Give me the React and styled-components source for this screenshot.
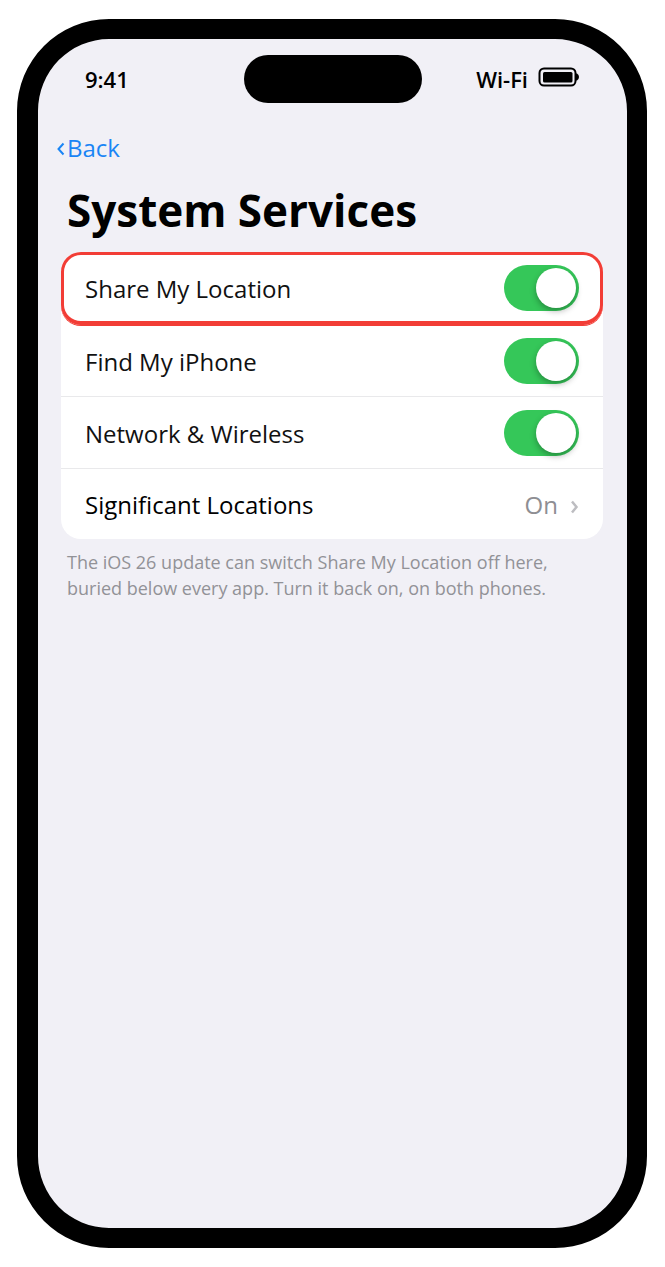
import React from "react";
import styled, { createGlobalStyle } from "styled-components";

const GlobalStyle = createGlobalStyle`
  * {
    box-sizing: border-box;
  }

  body {
    margin: 0;
    background: #fff;
    color: #000;
    font-family: "Open Sans", "Noto Sans", sans-serif;
  }
`;

const Page = styled.div`
  display: flex;
  min-height: 100vh;
  padding: 19px 18px 19px 17px;
`;

const Phone = styled.div`
  flex: 1;
  min-width: 0;
  border: 20px solid #000;
  border-left-width: 21px;
  border-radius: 92px;
  background: #f1f0f6;
`;

const StatusBar = styled.header`
  display: grid;
  grid-template-columns: 1fr 178px 1fr;
  align-items: center;
  padding: 16px 47px 0;
  font-size: 22px;
  font-weight: 600;
  line-height: 48px;
`;

const Island = styled.div`
  height: 48px;
  border-radius: 24px;
  background: #000;
`;

const Indicators = styled.div`
  display: flex;
  justify-content: flex-end;
  gap: 10px;
`;

const BatteryIcon = styled.svg`
  width: 42px;
  height: 20px;
  margin-top: 12px;
`;

const BackLink = styled.a`
  display: inline-flex;
  align-items: center;
  gap: 2px;
  margin: 28px 0 0 18px;
  color: #1a85f5;
  font-size: 24px;
  line-height: 34px;
  text-decoration: none;
`;

const BackChevron = styled.svg`
  width: 9px;
  height: 14px;
  margin-top: 2px;
`;

const Title = styled.h1`
  margin: 13px 29px 0;
  font-size: 44px;
  font-weight: 700;
  line-height: 64px;
`;

const List = styled.ul`
  margin: 10px 24px 0 23px;
  padding: 0;
  list-style: none;
  border-radius: 20px;
  background: #fff;
`;

const Row = styled.li`
  display: flex;
  align-items: center;
  justify-content: space-between;
  height: ${props => (props.$highlighted ? 73 : 72)}px;
  padding: 0 ${props => (props.$highlighted ? 21 : 24)}px;
  font-size: 24px;
  border: 0 solid #e9e9eb;
  border-bottom-width: 1px;

  &:last-child {
    height: 70px;
    border-bottom-width: 0;
  }

  ${props =>
    props.$highlighted &&
    `
    border: 3px solid #f23d36;
    border-bottom-width: 4px;
    border-radius: 20px;
    box-shadow: 0 1px 0 #f23d36;
  `}
`;

const Label = styled.label`
  padding-top: 2px;
  color: #111;
  line-height: 34px;
`;

const Switch = styled.input`
  appearance: none;
  display: flex;
  justify-content: flex-end;
  width: 75px;
  height: 46px;
  margin: 0;
  padding: 3px;
  border-radius: 23px;
  background: #e9e9ea;
  cursor: pointer;

  &::before {
    content: "";
    width: 40px;
    height: 40px;
    border-radius: 50%;
    background: #fff;
    box-shadow: 0 3px 6px rgba(0, 0, 0, 0.3);
  }

  &:checked {
    background: #35c759;
  }

  &:not(:checked) {
    justify-content: flex-start;
  }
`;

const DetailLink = styled.a`
  flex: 1;
  display: flex;
  align-items: center;
  justify-content: space-between;
  padding-top: 2px;
  color: inherit;
  line-height: 34px;
  text-decoration: none;
`;

const Detail = styled.span`
  display: flex;
  align-items: center;
  gap: 12px;
  color: #8e8e93;
`;

const DetailChevron = styled.svg`
  width: 9px;
  height: 14px;
  margin-top: 4px;
`;

const Note = styled.p`
  margin: 10px 29px 0;
  color: #929297;
  font-size: 18px;
  line-height: 26px;
`;

const Battery = () => (
  <BatteryIcon viewBox="0 0 42 20" aria-hidden="true">
    <rect
      x="1.5"
      y="1.5"
      width="36"
      height="17"
      rx="4.5"
      fill="none"
      stroke="#000"
      strokeWidth="2"
    />
    <rect x="5" y="5" width="29.5" height="10.5" rx="1.5" />
    <path d="M38 6.5h1q2 1 2 3.5t-2 3.5h-1z" />
  </BatteryIcon>
);

const services = [
  { id: "share", name: "Share My Location", highlighted: true },
  { id: "find", name: "Find My iPhone" },
  { id: "network", name: "Network & Wireless" }
];

class App extends React.Component {
  constructor() {
    super();
    this.state = { share: true, find: true, network: true };
  }

  toggle(id) {
    this.setState({ [id]: !this.state[id] });
  }

  render() {
    return (
      <Page>
        <GlobalStyle />
        <Phone>
          <StatusBar>
            <span>9:41</span>
            <Island />
            <Indicators>
              <span>Wi-Fi</span>
              <Battery />
            </Indicators>
          </StatusBar>
          <BackLink href="#back">
            <BackChevron viewBox="0 0 9 14" aria-hidden="true">
              <path
                d="M7.5 1.5L2.5 7l5 5.5"
                fill="none"
                stroke="currentColor"
                strokeWidth="2"
              />
            </BackChevron>
            Back
          </BackLink>
          <Title>System Services</Title>
          <List>
            {services.map(service => (
              <Row key={service.id} $highlighted={service.highlighted}>
                <Label htmlFor={service.id}>{service.name}</Label>
                <Switch
                  id={service.id}
                  type="checkbox"
                  role="switch"
                  checked={this.state[service.id]}
                  onChange={() => this.toggle(service.id)}
                />
              </Row>
            ))}
            <Row>
              <DetailLink href="#significant">
                Significant Locations
                <Detail>
                  On
                  <DetailChevron viewBox="0 0 9 14" aria-hidden="true">
                    <path
                      d="M2 1.5L6.5 7 2 12.5"
                      fill="none"
                      stroke="#bdbdc1"
                      strokeWidth="2.5"
                    />
                  </DetailChevron>
                </Detail>
              </DetailLink>
            </Row>
          </List>
          <Note>
            The iOS 26 update can switch Share My Location off here, buried
            below every app. Turn it back on, on both phones.
          </Note>
        </Phone>
      </Page>
    );
  }
}

export default App;
